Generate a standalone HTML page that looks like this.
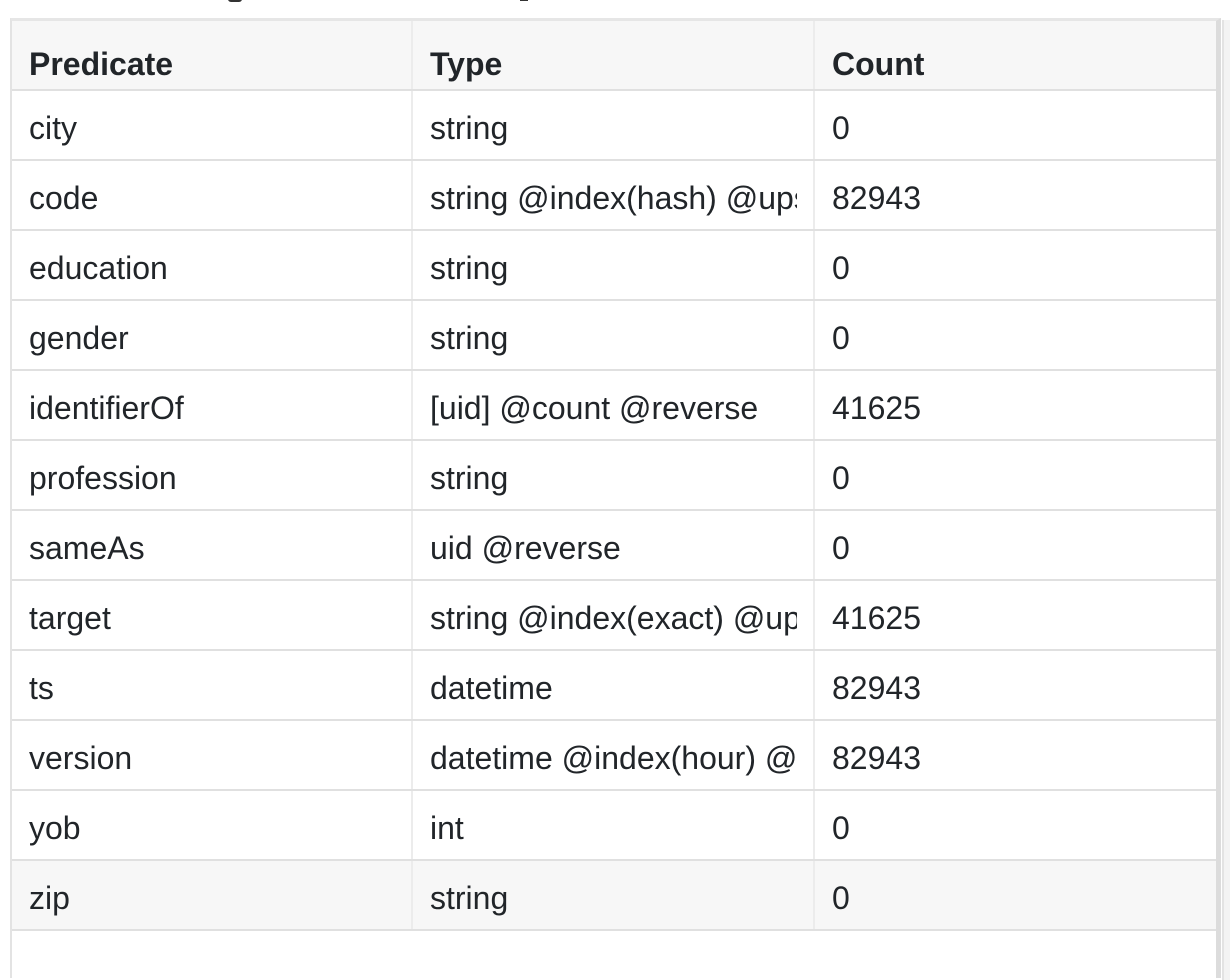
<!DOCTYPE html>
<html><head><meta charset="utf-8"><style>
html,body{margin:0;padding:0;background:#fff;width:1230px;height:958px;overflow:hidden;font-family:"Liberation Sans",sans-serif;color:#212529}
.box{position:absolute;left:10px;top:18px;width:1211px;height:960px;border-top:3px solid #e6e6e6;border-left:2px solid #e3e3e3;border-right:5px solid #dcdcdc;box-sizing:border-box}
.side{position:absolute;left:1222px;top:20px;width:20px;height:960px;border-left:2px solid #e3e3e3;background:#f3f3f3}
.row{position:absolute;left:12px;width:1204px;height:68px;border-bottom:2px solid #e0e0e0}
.c{position:absolute;top:0;height:68px;line-height:74px;font-size:32px;padding-left:17px;box-sizing:border-box;overflow:hidden;white-space:nowrap}
.c1{left:0;width:401px;border-right:2px solid #ececec}
.c2{left:401px;width:402px;border-right:2px solid #ececec;padding-right:16px}
.c3{left:803px;width:401px}
.h{background:#f7f7f7;font-weight:bold}
.hv{background:#f7f7f7}
.c2 span{display:block;overflow:hidden}
</style></head><body>
<div style="position:absolute;left:228px;top:-8px;width:14px;height:10px;background:#333;border-radius:3px"></div>
<div style="position:absolute;left:520px;top:-8px;width:8px;height:9px;background:#333"></div>
<div class="box"></div>
<div class="side"></div>
<div class="row h" style="top:21px;height:68px"><div class="c c1" style="line-height:86px">Predicate</div><div class="c c2" style="line-height:86px">Type</div><div class="c c3" style="line-height:86px">Count</div></div>
<div class="row" style="top:91px"><div class="c c1">city</div><div class="c c2"><span>string</span></div><div class="c c3">0</div></div>
<div class="row" style="top:161px"><div class="c c1">code</div><div class="c c2"><span>string @index(hash) @upsert</span></div><div class="c c3">82943</div></div>
<div class="row" style="top:231px"><div class="c c1">education</div><div class="c c2"><span>string</span></div><div class="c c3">0</div></div>
<div class="row" style="top:301px"><div class="c c1">gender</div><div class="c c2"><span>string</span></div><div class="c c3">0</div></div>
<div class="row" style="top:371px"><div class="c c1">identifierOf</div><div class="c c2"><span>[uid] @count @reverse</span></div><div class="c c3">41625</div></div>
<div class="row" style="top:441px"><div class="c c1">profession</div><div class="c c2"><span>string</span></div><div class="c c3">0</div></div>
<div class="row" style="top:511px"><div class="c c1">sameAs</div><div class="c c2"><span>uid @reverse</span></div><div class="c c3">0</div></div>
<div class="row" style="top:581px"><div class="c c1">target</div><div class="c c2"><span>string @index(exact) @upsert</span></div><div class="c c3">41625</div></div>
<div class="row" style="top:651px"><div class="c c1">ts</div><div class="c c2"><span>datetime</span></div><div class="c c3">82943</div></div>
<div class="row" style="top:721px"><div class="c c1">version</div><div class="c c2"><span>datetime @index(hour) @upsert</span></div><div class="c c3">82943</div></div>
<div class="row" style="top:791px"><div class="c c1">yob</div><div class="c c2"><span>int</span></div><div class="c c3">0</div></div>
<div class="row hv" style="top:861px"><div class="c c1">zip</div><div class="c c2"><span>string</span></div><div class="c c3">0</div></div>
</body></html>
